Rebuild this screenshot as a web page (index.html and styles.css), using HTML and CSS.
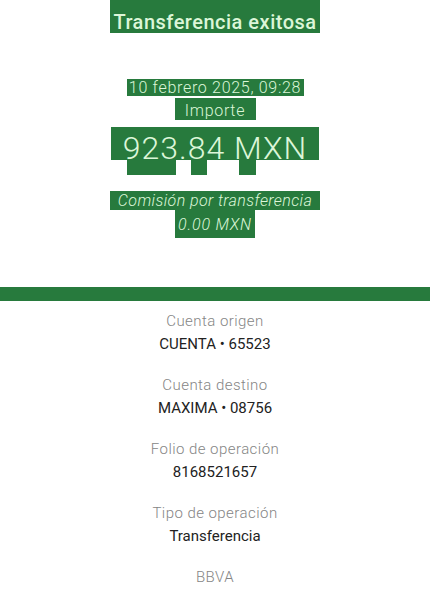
FILE: index.html
```html
<!DOCTYPE html>
<html lang="es">
<head>
<meta charset="utf-8">
<title>Transferencia exitosa</title>
<link rel="stylesheet" href="styles.css">
</head>
<body>
<header class="summary">
  <h1 class="hl title">Transferencia exitosa</h1>
  <p class="hl date">10 febrero 2025, 09:28</p>
  <p class="hl label-amount">Importe</p>
  <p class="hl amount">923.84 MXN</p>
  <div class="amount-tail"></div>
  <p class="hl fee">Comisión por transferencia</p>
  <p class="hl fee-value">0.00 MXN</p>
</header>
<div class="bar"></div>
<main class="details">
  <div class="item"><div class="label">Cuenta origen</div><div class="value">CUENTA • 65523</div></div>
  <div class="item"><div class="label">Cuenta destino</div><div class="value">MAXIMA • 08756</div></div>
  <div class="item"><div class="label">Folio de operación</div><div class="value">8168521657</div></div>
  <div class="item"><div class="label">Tipo de operación</div><div class="value">Transferencia</div></div>
  <div class="item"><div class="label">BBVA</div></div>
</main>
</body>
</html>
```
FILE: styles.css
```css
html, body {
  margin: 0;
  padding: 0;
  background: #ffffff;
}
body {
  font-family: Roboto, "Open Sans", sans-serif;
  width: 430px;
  height: 597px;
  overflow: hidden;
}
.summary {
  display: flex;
  flex-direction: column;
  align-items: center;
}
.hl {
  box-sizing: border-box;
  margin: 0;
  background: #277a3d;
  color: #dcf6d8;
  font-weight: 300;
  white-space: nowrap;
  text-align: center;
}
.title {
  width: 210px;
  font-size: 20px;
  font-weight: 500;
  letter-spacing: 0.5px;
  line-height: 20px;
  padding: 12px 0 1px;
}
.date {
  width: 177px;
  margin-top: 46px;
  font-size: 16px;
  letter-spacing: 0.7px;
  line-height: 16px;
  padding-top: 1px;
}
.label-amount {
  width: 81px;
  margin-top: 2px;
  font-size: 16px;
  letter-spacing: 0.7px;
  line-height: 19px;
  padding: 3px 0 0;
}
.amount {
  width: 208px;
  margin-top: 7px;
  font-size: 32px;
  letter-spacing: 1px;
  line-height: 24px;
  padding-top: 9px;
}
.amount-tail {
  width: 208px;
  height: 15px;
  background: linear-gradient(to right,
    transparent 0 16px, #277a3d 16px 65px,
    transparent 65px 80px, #277a3d 80px 96px,
    transparent 96px 128px, #277a3d 128px 145px,
    transparent 145px);
}
.fee {
  width: 210px;
  margin-top: 16px;
  font-size: 16px;
  font-style: italic;
  letter-spacing: 0.4px;
  line-height: 19px;
}
.fee-value {
  width: 80px;
  font-size: 16px;
  font-style: italic;
  letter-spacing: 0.8px;
  line-height: 19px;
  padding: 5px 0 4px;
}
.bar {
  margin-top: 49px;
  height: 14px;
  background: #277a3d;
}
.details {
  padding-top: 9px;
  display: flex;
  flex-direction: column;
  align-items: center;
  gap: 18px;
}
.item {
  display: flex;
  flex-direction: column;
  align-items: center;
}
.label {
  font-size: 15px;
  font-weight: 300;
  letter-spacing: 0.45px;
  line-height: 23px;
  color: #858585;
}
.value {
  font-size: 15px;
  font-weight: 400;
  line-height: 23px;
  color: #222222;
}
```
